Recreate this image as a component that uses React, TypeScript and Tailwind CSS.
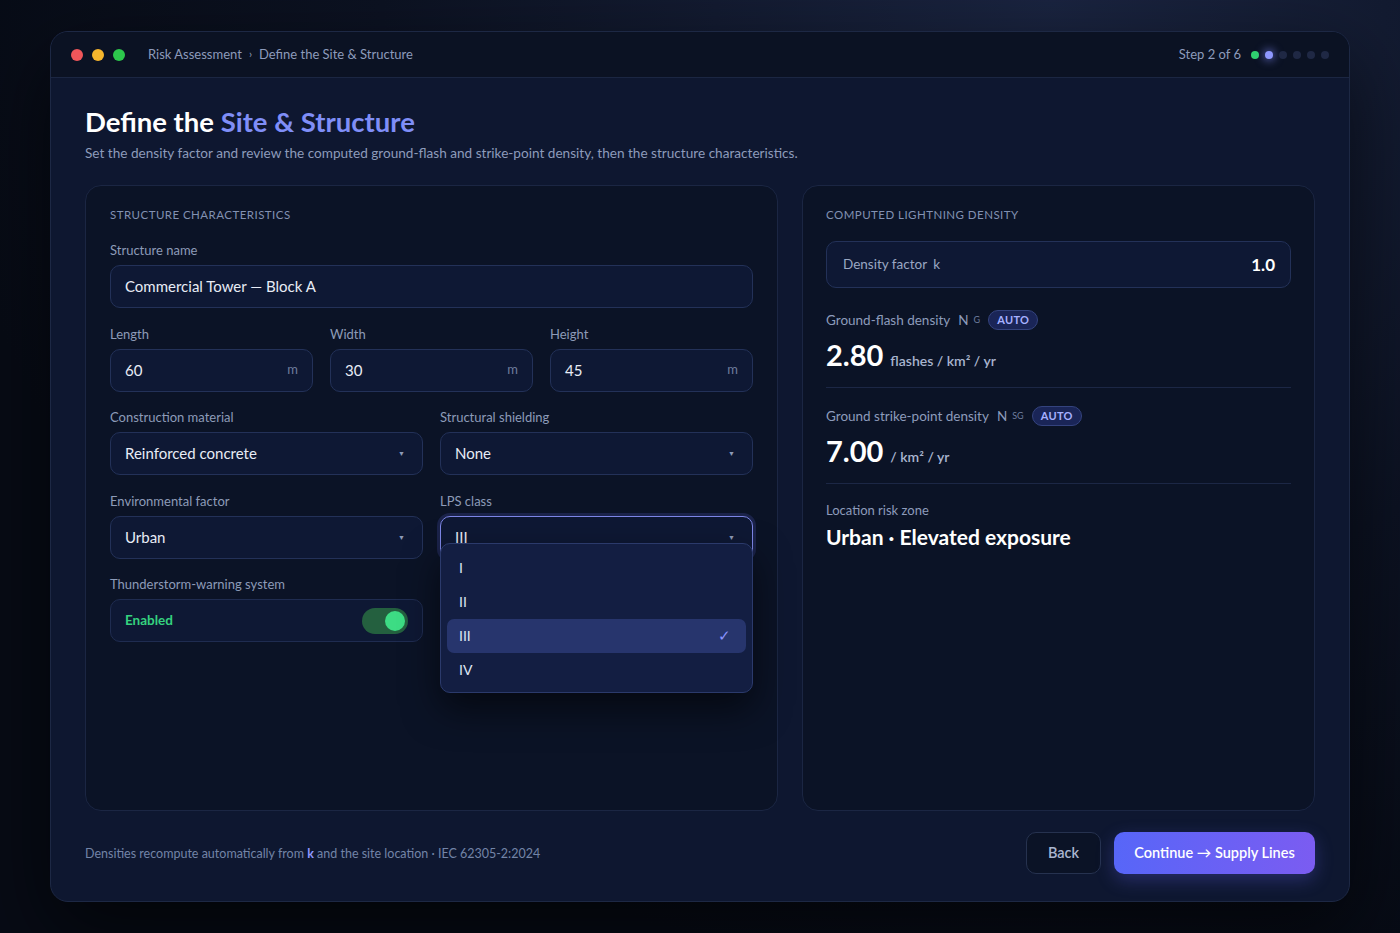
const font = { fontFamily: 'Lato, "Noto Sans", sans-serif' };

function Label({ children }: { children: React.ReactNode }) {
  return <div className="text-[13px] leading-4 text-[#8d9bb8] mb-[7px]">{children}</div>;
}

function NumberField({ label, value }: { label: string; value: string }) {
  return (
    <div>
      <Label>{label}</Label>
      <div className="h-[43px] rounded-[10px] border border-[#233158] bg-[#0e1834] flex items-center justify-between px-[14px]">
        <span className="text-[15px] text-[#e8ecf6]">{value}</span>
        <span className="text-[13px] text-[#6e7d9e]">m</span>
      </div>
    </div>
  );
}

function SelectField({
  label,
  value,
  open,
}: {
  label: string;
  value: string;
  open?: boolean;
}) {
  return (
    <div className="relative">
      <Label>{label}</Label>
      <div
        className={
          open
            ? "h-[43px] rounded-[10px] border border-[#7d86e6] bg-[#0e1834] flex items-center justify-between px-[14px] shadow-[0_0_0_3px_rgba(99,110,241,0.18)]"
            : "h-[43px] rounded-[10px] border border-[#233158] bg-[#0e1834] flex items-center justify-between px-[14px]"
        }
      >
        <span className="text-[15px] text-[#e8ecf6]">{value}</span>
        <span className="text-[7px] text-[#8d9bb8] mr-[3px]">▼</span>
      </div>
      {open && (
        <div className="absolute left-0 right-0 top-[50px] z-10 rounded-[10px] border border-[#2b3a6b] bg-[#131e42] pt-[7px] pb-[5px] px-[6px] shadow-[0_16px_36px_rgba(0,0,0,0.55)]">
          {["I", "II", "III", "IV"].map((o) => (
            <div
              key={o}
              className={
                o === "III"
                  ? "h-[34px] rounded-[7px] bg-[#27356d] flex items-center justify-between px-[12px]"
                  : "h-[34px] rounded-[7px] flex items-center justify-between px-[12px]"
              }
            >
              <span className="text-[14px] text-[#dfe5f3]">{o}</span>
              {o === "III" && <span className="text-[15px] text-[#8a93ff] mr-[3px]">✓</span>}
            </div>
          ))}
        </div>
      )}
    </div>
  );
}

function Badge() {
  return (
    <span className="ml-[8px] h-[20px] px-[8px] rounded-full border border-[#34437e] bg-[#1a2557] text-[#a6b0ff] text-[11px] font-bold flex items-center tracking-[0.03em]">
      AUTO
    </span>
  );
}

export default function App() {
  return (
    <div
      style={font}
      className="min-h-[933px] w-full bg-[#070b15] bg-[radial-gradient(ellipse_at_75%_0%,#1a2440_0%,#0c1222_45%,#070b15_75%)] py-[31px]"
    >
      <div className="mx-auto w-[1300px] h-[871px] rounded-[18px] border border-[#1d2844] bg-[#0e1730] overflow-hidden flex flex-col shadow-[0_30px_80px_rgba(0,0,0,0.6)]">
        {/* title bar */}
        <div className="h-[46px] shrink-0 bg-[#0b1223] border-b border-[#1b2642] flex items-center px-[20px]">
          <div className="flex items-center gap-[9px]">
            <span className="w-[12px] h-[12px] rounded-full bg-[#f0565a]" />
            <span className="w-[12px] h-[12px] rounded-full bg-[#f6b62d]" />
            <span className="w-[12px] h-[12px] rounded-full bg-[#2dc84c]" />
          </div>
          <div className="ml-[23px] text-[13px] text-[#8d9bbb] flex items-center">
            <span>Risk Assessment</span>
            <span className="mx-[7px] text-[11px]">›</span>
            <span>Define the Site &amp; Structure</span>
          </div>
          <div className="ml-auto flex items-center">
            <span className="text-[13px] text-[#8d9bbb] mr-[10px]">Step 2 of 6</span>
            <div className="flex items-center gap-[6px]">
              <span className="w-[8px] h-[8px] rounded-full bg-[#2fd06f]" />
              <span className="w-[8px] h-[8px] rounded-full bg-[#8f98ff] shadow-[0_0_8px_2px_rgba(130,140,255,0.55)]" />
              <span className="w-[8px] h-[8px] rounded-full bg-[#1f2844]" />
              <span className="w-[8px] h-[8px] rounded-full bg-[#1f2844]" />
              <span className="w-[8px] h-[8px] rounded-full bg-[#1f2844]" />
              <span className="w-[8px] h-[8px] rounded-full bg-[#1f2844]" />
            </div>
          </div>
        </div>

        {/* content */}
        <div className="flex-1 flex flex-col px-[34px] pt-[28px] pb-[27px]">
          <h1 className="text-[27.5px] leading-[32px] font-bold text-white">
            Define the <span className="text-[#7f8ef7]">Site &amp; Structure</span>
          </h1>
          <p className="mt-[5px] text-[13.6px] leading-5 text-[#8d9bbb]">
            Set the density factor and review the computed ground-flash and strike-point density, then the structure characteristics.
          </p>

          <div className="mt-[22px] flex-1 flex gap-[24px]">
            {/* left card */}
            <div className="w-[693px] rounded-[16px] border border-[#1b2643] bg-[#0b1326] px-[24px] pt-[21px]">
              <div className="text-[11.5px] leading-4 tracking-[0.04em] text-[#8291b2] mb-[19px]">
                STRUCTURE CHARACTERISTICS
              </div>
              <div className="flex flex-col gap-[17.5px]">
                <div>
                  <Label>Structure name</Label>
                  <div className="h-[43px] rounded-[10px] border border-[#233158] bg-[#0e1834] flex items-center px-[14px]">
                    <span className="text-[15px] text-[#e8ecf6]">Commercial Tower — Block A</span>
                  </div>
                </div>
                <div className="grid grid-cols-3 gap-[17px]">
                  <NumberField label="Length" value="60" />
                  <NumberField label="Width" value="30" />
                  <NumberField label="Height" value="45" />
                </div>
                <div className="grid grid-cols-2 gap-[17px]">
                  <SelectField label="Construction material" value="Reinforced concrete" />
                  <SelectField label="Structural shielding" value="None" />
                </div>
                <div className="grid grid-cols-2 gap-[17px]">
                  <SelectField label="Environmental factor" value="Urban" />
                  <SelectField label="LPS class" value="III" open />
                </div>
                <div className="grid grid-cols-2 gap-[17px]">
                  <div>
                    <Label>Thunderstorm-warning system</Label>
                    <div className="h-[43px] rounded-[10px] border border-[#1f2c50] bg-[#0e1834] flex items-center justify-between pl-[14px] pr-[14px]">
                      <span className="text-[13.5px] font-bold text-[#35d27f]">Enabled</span>
                      <div className="w-[46px] h-[26px] rounded-full bg-[#24603f] flex items-center justify-end pr-[3px]">
                        <span className="w-[20px] h-[20px] rounded-full bg-[#3ddc84]" />
                      </div>
                    </div>
                  </div>
                </div>
              </div>
            </div>

            {/* right card */}
            <div className="flex-1 rounded-[16px] border border-[#1b2643] bg-[#0b1326] px-[23px] pt-[21px]">
              <div className="text-[11.5px] leading-4 tracking-[0.04em] text-[#8291b2] mb-[18px]">
                COMPUTED LIGHTNING DENSITY
              </div>
              <div className="h-[47px] rounded-[10px] border border-[#233158] bg-[#0e1834] flex items-center justify-between pl-[16px] pr-[15px]">
                <span className="text-[13.5px] text-[#9aa7c3]">
                  Density factor <span className="ml-[3px]">k</span>
                </span>
                <span className="text-[17px] font-bold text-white">1.0</span>
              </div>

              <div className="mt-[22px] pb-[15px] border-b border-[#1c2745]">
                <div className="flex items-center h-[20px]">
                  <span className="text-[13.5px] text-[#8d9bbb]">Ground-flash density</span>
                  <span className="ml-[8px] text-[13.5px] text-[#8d9bbb]">N</span>
                  <span className="ml-[5px] text-[9px] text-[#6e7d9e]">G</span>
                  <Badge />
                </div>
                <div className="mt-[8px] flex items-baseline">
                  <span className="text-[29px] leading-[34px] font-bold text-white">2.80</span>
                  <span className="ml-[7px] text-[14px] font-semibold text-[#a9b5cf]">flashes / km² / yr</span>
                </div>
              </div>

              <div className="pt-[18px] pb-[15px] border-b border-[#1c2745]">
                <div className="flex items-center h-[20px]">
                  <span className="text-[13.5px] text-[#8d9bbb]">Ground strike-point density</span>
                  <span className="ml-[8px] text-[13.5px] text-[#8d9bbb]">N</span>
                  <span className="ml-[5px] text-[9px] text-[#6e7d9e]">SG</span>
                  <Badge />
                </div>
                <div className="mt-[8px] flex items-baseline">
                  <span className="text-[29px] leading-[34px] font-bold text-white">7.00</span>
                  <span className="ml-[7px] text-[14px] font-semibold text-[#a9b5cf]">/ km² / yr</span>
                </div>
              </div>

              <div className="pt-[18px]">
                <div className="text-[13px] leading-4 text-[#8d9bbb]">Location risk zone</div>
                <div className="mt-[5px] text-[21px] leading-[28px] font-bold text-white">Urban · Elevated exposure</div>
              </div>
            </div>
          </div>

          {/* footer */}
          <div className="mt-[21px] flex items-center">
            <span className="text-[12.5px] text-[#7384a7] mt-[2px]">
              Densities recompute automatically from <span className="font-bold text-[#8f98ff]">k</span> and the site location · IEC 62305-2:2024
            </span>
            <div className="ml-auto flex items-center gap-[13px]">
              <button className="h-[42px] w-[75px] rounded-[10px] border border-[#26324f] bg-[#0b1326] text-[14.5px] font-semibold text-[#aab6d0]">
                Back
              </button>
              <button className="h-[42px] w-[201px] rounded-[10px] bg-[linear-gradient(90deg,#5766f8,#7b5cf1)] text-[14.5px] font-semibold text-white shadow-[0_6px_18px_rgba(95,95,240,0.3)]">
                Continue → Supply Lines
              </button>
            </div>
          </div>
        </div>
      </div>
    </div>
  );
}
